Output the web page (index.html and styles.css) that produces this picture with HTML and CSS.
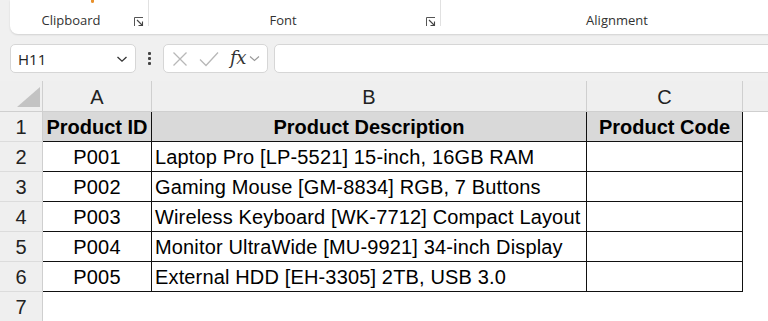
FILE: index.html
```html
<!DOCTYPE html>
<html>
<head>
<meta charset="utf-8">
<link rel="stylesheet" href="styles.css">
</head>
<body>
<div class="app">
  <div class="ribbon">
    <div class="group">
      <span class="paste-mark"></span>
      <div class="label lbl-clip">Clipboard</div>
      <svg class="launcher" width="10" height="10" viewBox="0 0 10 10"><path d="M0.5 9V0.5H9" fill="none" stroke="#555" stroke-width="1"/><path d="M3 3L8.5 8.5M8.5 4.5V8.5H4.5" fill="none" stroke="#444" stroke-width="1.1"/></svg>
      <div class="sep"></div>
    </div>
    <div class="group">
      <div class="label lbl-font">Font</div>
      <svg class="launcher l2" width="10" height="10" viewBox="0 0 10 10"><path d="M0.5 9V0.5H9" fill="none" stroke="#555" stroke-width="1"/><path d="M3 3L8.5 8.5M8.5 4.5V8.5H4.5" fill="none" stroke="#444" stroke-width="1.1"/></svg>
      <div class="sep"></div>
    </div>
    <div class="group">
      <div class="label lbl-align">Alignment</div>
    </div>
  </div>

  <div class="fbar">
    <div class="namebox">
      <span class="name">H11</span>
      <svg width="12" height="8" viewBox="0 0 12 8"><path d="M1.5 2L6 6.2L10.5 2" fill="none" stroke="#333" stroke-width="1.3"/></svg>
    </div>
    <div class="dots"><i></i><i></i><i></i></div>
    <div class="fxbox">
      <svg class="ic-x" width="16" height="16" viewBox="0 0 16 16"><path d="M1.5 1.5L14.5 14.5M14.5 1.5L1.5 14.5" stroke="#b8b8b8" stroke-width="1.3"/></svg>
      <svg class="ic-ok" width="20" height="16" viewBox="0 0 20 16"><path d="M1 8.5L7 14.5L19 1.5" fill="none" stroke="#b8b8b8" stroke-width="1.3"/></svg>
      <span class="fx">fx</span>
      <svg class="ic-dd" width="11" height="7" viewBox="0 0 11 7"><path d="M1 1.5L5.5 5.5L10 1.5" fill="none" stroke="#999" stroke-width="1.1"/></svg>
    </div>
    <div class="finput"></div>
  </div>

  <div class="sheet">
    <div class="corner"><svg width="23" height="20" viewBox="0 0 23 20"><polygon points="23,0 23,20 0,20" fill="#c3c3c3"/></svg></div>
    <div class="ch">A</div>
    <div class="ch">B</div>
    <div class="ch">C</div>
    <div class="ch last"></div>

    <div class="rh">1</div>
    <div class="c hd">Product ID</div>
    <div class="c hd">Product Description</div>
    <div class="c hd">Product Code</div>
    <div class="e"></div>

    <div class="rh">2</div>
    <div class="c ctr">P001</div>
    <div class="c">Laptop Pro [LP-5521] 15-inch, 16GB RAM</div>
    <div class="c"></div>
    <div class="e"></div>

    <div class="rh">3</div>
    <div class="c ctr">P002</div>
    <div class="c">Gaming Mouse [GM-8834] RGB, 7 Buttons</div>
    <div class="c"></div>
    <div class="e"></div>

    <div class="rh">4</div>
    <div class="c ctr">P003</div>
    <div class="c">Wireless Keyboard [WK-7712] Compact Layout</div>
    <div class="c"></div>
    <div class="e"></div>

    <div class="rh">5</div>
    <div class="c ctr">P004</div>
    <div class="c">Monitor UltraWide [MU-9921] 34-inch Display</div>
    <div class="c"></div>
    <div class="e"></div>

    <div class="rh">6</div>
    <div class="c ctr">P005</div>
    <div class="c">External HDD [EH-3305] 2TB, USB 3.0</div>
    <div class="c"></div>
    <div class="e"></div>

    <div class="rh">7</div>
    <div class="e"></div>
    <div class="e"></div>
    <div class="e"></div>
    <div class="e"></div>
  </div>
</div>
</body>
</html>
```
FILE: styles.css
```css
* { box-sizing: border-box; }
html, body { margin: 0; padding: 0; }
body {
  background: #f0f0f0;
  width: 768px;
  height: 321px;
  overflow: hidden;
  font-family: "Liberation Sans", Arial, sans-serif;
}
.app { width: 768px; }

/* ribbon */
.ribbon {
  margin-left: 10px;
  width: 780px;
  height: 34px;
  background: #fff;
  border-bottom-left-radius: 8px;
  box-shadow: 0 1px 2px rgba(0,0,0,0.13);
  display: flex;
}
.group {
  display: flex;
  align-items: flex-start;
  position: relative;
}
.paste-mark {
  position: absolute;
  left: 81px;
  top: 0;
  width: 3px;
  height: 3px;
  background: #e8912d;
  border-radius: 0 0 2px 2px;
}
.label {
  margin-top: 12px;
  font-family: "Open Sans", "Noto Sans", sans-serif;
  font-size: 13px;
  line-height: 17px;
  color: #323232;
  text-align: center;
}
.lbl-clip { width: 122px; }
.lbl-font { width: 268px; }
.lbl-align { width: 352px; }
.launcher { margin-top: 17px; margin-left: 2px; flex: none; }
.launcher.l2 { margin-left: 9px; }
.sep {
  width: 1px;
  height: 26px;
  background: #e1e1e1;
  margin-left: 4px;
}

/* formula bar */
.fbar {
  height: 47px;
  padding-top: 10px;
  display: flex;
  align-items: flex-start;
}
.namebox {
  margin-left: 10px;
  width: 126px;
  height: 29px;
  background: #fff;
  border: 1px solid #d6d6d6;
  border-radius: 5px;
  display: flex;
  align-items: center;
  justify-content: space-between;
  padding: 0 7px 0 7px;
}
.name {
  font-family: "Open Sans", "Noto Sans", sans-serif;
  font-size: 15px;
  color: #222;
}
.dots {
  width: 27px;
  height: 29px;
  display: flex;
  flex-direction: column;
  align-items: center;
  justify-content: center;
  gap: 2px;
}
.dots i {
  display: block;
  width: 3px;
  height: 3px;
  background: #444;
  border-radius: 1px;
}
.fxbox {
  width: 105px;
  height: 29px;
  background: #fff;
  border: 1px solid #d6d6d6;
  border-radius: 5px;
  display: flex;
  align-items: center;
  padding-left: 8px;
}
.ic-x { margin-right: 11px; }
.ic-ok { margin-right: 11px; }
.fx {
  font-family: "DejaVu Serif", "Liberation Serif", serif;
  font-style: italic;
  font-size: 18px;
  color: #333;
  letter-spacing: -0.5px;
  margin-right: 3px;
  margin-top: -2px;
}
.finput {
  margin-left: 6px;
  flex: 1;
  margin-right: -10px;
  height: 29px;
  background: #fff;
  border: 1px solid #d6d6d6;
  border-radius: 5px;
}

/* sheet */
.sheet {
  display: grid;
  grid-template-columns: 43px 109px 435px 156px 1fr;
  grid-template-rows: 31px repeat(7, 30px);
  background: #fff;
  font-size: 20px;
  color: #000;
}
.corner {
  background: #efefef;
  border-right: 1px solid #cfcfcf;
  border-bottom: 1px solid #cfcfcf;
  display: flex;
  align-items: flex-end;
  justify-content: flex-end;
  padding: 0 2px 4px 0;
}
.corner svg { display: block; }
.ch {
  background: #efefef;
  border-right: 1px solid #cfcfcf;
  border-bottom: 1px solid #cfcfcf;
  display: flex;
  align-items: center;
  justify-content: center;
  color: #222;
  padding-top: 2px;
}
.ch.last { border-right: none; }
.rh {
  background: #efefef;
  border-right: 1px solid #cfcfcf;
  border-bottom: 1px solid #dcdcdc;
  display: flex;
  align-items: center;
  justify-content: center;
  color: #222;
  padding-top: 1px;
}
.c {
  border-right: 1px solid #111;
  border-bottom: 1px solid #111;
  display: flex;
  align-items: center;
  padding: 1px 0 0 3px;
  white-space: nowrap;
  overflow: hidden;
  letter-spacing: 0.15px;
}
.c.hd {
  background: #d9d9d9;
  font-weight: bold;
  justify-content: center;
  padding-left: 0;
  letter-spacing: 0;
}
.c.ctr { justify-content: center; padding-left: 0; }
.e { background: #fff; }
```
